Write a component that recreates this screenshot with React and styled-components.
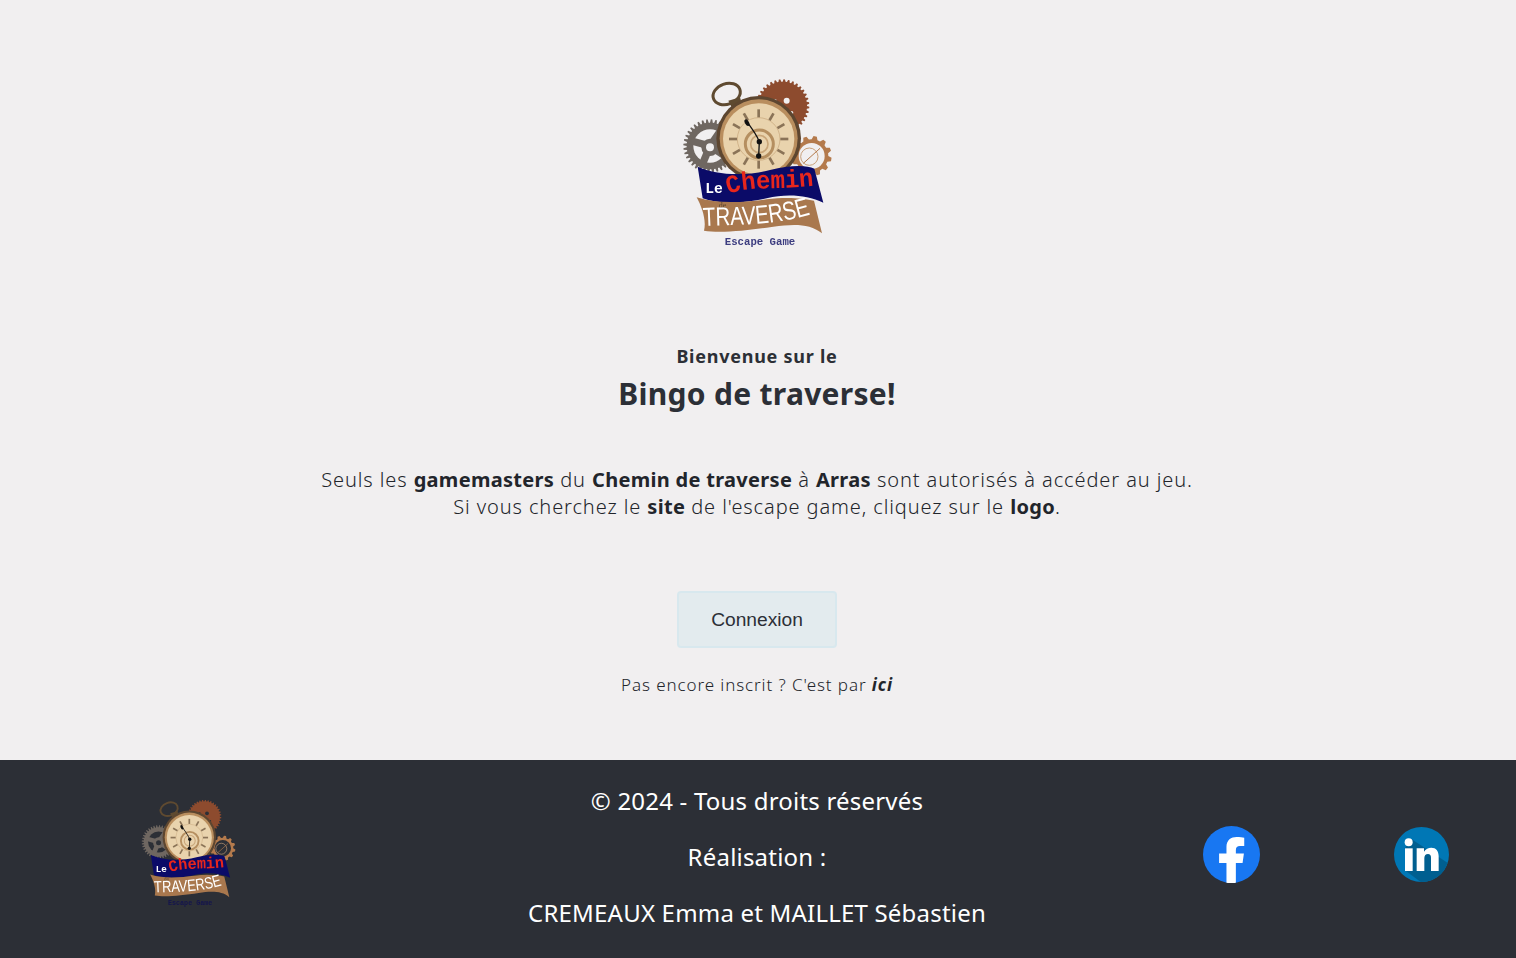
import React, { useId } from "react";
import styled, { createGlobalStyle } from "styled-components";

const GlobalStyle = createGlobalStyle`
  html, body {
    margin: 0;
    padding: 0;
    background: #f1eff0;
  }
  body {
    font-family: "Noto Sans", "Open Sans", sans-serif;
    color: #2c2f36;
  }
`;

// toothed wheel, used three times in the logo
const gearPath = (cx, cy, outer, inner, teeth) => {
  const step = (Math.PI * 2) / teeth;
  let d = "";
  for (let i = 0; i < teeth; i++) {
    const a = i * step;
    const pts = [
      [inner, a],
      [outer, a + step * 0.18],
      [outer, a + step * 0.5],
      [inner, a + step * 0.68],
    ];
    pts.forEach(([r, t], j) => {
      const x = (cx + r * Math.cos(t)).toFixed(1);
      const y = (cy + r * Math.sin(t)).toFixed(1);
      d += `${i === 0 && j === 0 ? "M" : "L"}${x} ${y} `;
    });
  }
  return d + "Z";
};

const romanAngles = Array.from({ length: 12 }, (_, i) => i * 30);

const Logo = ({ size, dark }) => {
  const id = useId();
  const chemin = `${id}-chemin`;
  const traverse = `${id}-traverse`;
  const hole = dark ? "#2c2f36" : "#f1eff0";
  return (
    <LogoSvg viewBox="0 0 570 570" width={size} height={size}>
      <defs>
        <path id={chemin} d="M204 372 C280 345 350 362 480 345 L560 340" />
        <path id={traverse} d="M130 468 C230 462 330 470 455 432 L560 400" />
      </defs>

      <ellipse cx="200" cy="72" rx="42" ry="31" transform="rotate(-20 200 72)" fill="none" stroke="#5f4a30" strokeWidth="9" />
      <path d="M205 92 L240 82 L250 118 L222 125 Z" fill="#5f4a30" />

      <path d={gearPath(368, 108, 80, 73, 36)} fill="#8d4b2e" />
      <circle cx="380" cy="92" r="9" fill={hole} />
      <circle cx="345" cy="92" r="5" fill={hole} />
      <circle cx="395" cy="128" r="5" fill={hole} />

      <path d={gearPath(150, 228, 80, 70, 36)} fill="#6f6761" />
      <circle cx="150" cy="228" r="50" fill={hole} />
      <g stroke="#6f6761" strokeWidth="22">
        <line x1="150" y1="228" x2="190" y2="170" />
        <line x1="150" y1="228" x2="92" y2="212" />
        <line x1="150" y1="228" x2="125" y2="288" />
        <line x1="150" y1="228" x2="200" y2="262" />
      </g>
      <circle cx="150" cy="232" r="26" fill="#6f6761" />
      <circle cx="150" cy="232" r="12" fill={hole} />

      <path d={gearPath(455, 258, 60, 50, 12)} fill="#b47a4c" />
      <circle cx="455" cy="258" r="39" fill={hole} />
      <circle cx="448" cy="260" r="26" fill="none" stroke="#c9a07a" strokeWidth="3" />
      <line x1="430" y1="280" x2="480" y2="235" stroke="#b47a4c" strokeWidth="3" />

      <circle cx="296" cy="205" r="127" fill="#5d4630" />
      <circle cx="296" cy="205" r="117" fill="#b98e5e" />
      <circle cx="296" cy="207" r="107" fill="#e9d3ad" />
      <circle cx="296" cy="207" r="64" fill="none" stroke="#c6a478" strokeWidth="2" />
      {romanAngles.map((a) => (
        <rect key={a} x="292" y="118" width="8" height="24" fill="#8a7357" transform={`rotate(${a} 296 207)`} />
      ))}
      <circle cx="298" cy="222" r="42" fill="none" stroke="#b58f60" strokeWidth="9" />
      <circle cx="298" cy="222" r="26" fill="none" stroke="#c9a679" strokeWidth="5" />
      <g stroke="#111" strokeLinecap="round" fill="#111">
        <path d="M258 152 C272 170 290 195 298 215" fill="none" strokeWidth="4" />
        <path d="M298 215 L296 258" fill="none" strokeWidth="4" />
        <ellipse cx="261" cy="158" rx="6" ry="11" transform="rotate(-30 261 158)" stroke="none" />
        <circle cx="298" cy="215" r="8" stroke="none" />
        <circle cx="296" cy="258" r="8" stroke="none" />
      </g>

      <path
        d="M113 290 C170 315 250 320 330 300 C390 285 440 285 463 296 L490 398 C440 375 380 370 320 385 C250 400 180 405 128 385 Z"
        fill="#0b0b68"
      />
      <path
        d="M110 382 C180 405 260 395 320 388 C380 380 430 385 462 392 L486 490 C450 460 400 462 340 470 C260 482 180 490 132 482 C140 450 125 410 110 382 Z"
        fill="#a9784e"
      />

      <LeText x="136" y="370">Le</LeText>
      <CheminText>
        <textPath href={`#${chemin}`} textLength="260" lengthAdjust="spacingAndGlyphs">Chemin</textPath>
      </CheminText>
      <DeText x="176" y="414">de</DeText>
      <TraverseText>
        <textPath href={`#${traverse}`} textLength="325" lengthAdjust="spacingAndGlyphs">TRAVERSE</textPath>
      </TraverseText>
      <EscapeText x="300" y="526" $dark={dark}>Escape Game</EscapeText>
    </LogoSvg>
  );
};

const FacebookIcon = () => (
  <SocialSvg viewBox="0 0 170 170" width="57" height="57">
    <circle cx="85" cy="85" r="85" fill="#1877f2" />
    <path
      d="M70 169 V110 H48 V82 H70 V62 C70 42 84 33 100 33 C110 33 118 34 123 35 V60 H110 C102 60 98 64 98 72 V82 H122 L118 110 H98 V169 A85 85 0 0 1 70 169 Z"
      fill="#fff"
    />
  </SocialSvg>
);

const LinkedinIcon = () => {
  const id = useId();
  return (
    <SocialSvg viewBox="0 0 165 165" width="55" height="55">
      <defs>
        <clipPath id={id}>
          <circle cx="82.5" cy="82.5" r="82.5" />
        </clipPath>
      </defs>
      <circle cx="82.5" cy="82.5" r="82.5" fill="#0077b5" />
      <path d="M52 36 L165 110 L165 165 L80 165 L33 130 L33 64 Z" fill="#005f90" clipPath={`url(#${id})`} />
      <circle cx="44" cy="46" r="12" fill="#fff" />
      <rect x="33" y="64" width="23" height="68" fill="#fff" />
      <path
        d="M68 64 H90 V74 C95 66 103 62 112 62 C126 62 134 72 134 88 V132 H111 V92 C111 85 108 81 102 81 C95 81 91 86 91 93 V132 H68 Z"
        fill="#fff"
      />
    </SocialSvg>
  );
};

export default function App() {
  return (
    <>
      <GlobalStyle />
      <Main>
        <LogoLink href="#">
          <Logo size={190} />
        </LogoLink>
        <Welcome>Bienvenue sur le</Welcome>
        <Title>Bingo de traverse!</Title>
        <Intro>
          Seuls les <strong>gamemasters</strong> du <strong>Chemin de traverse</strong> à{" "}
          <strong>Arras</strong> sont autorisés à accéder au jeu.
          <br />
          Si vous cherchez le <strong>site</strong> de l'escape game, cliquez sur le{" "}
          <strong>logo</strong>.
        </Intro>
        <LoginButton type="button">Connexion</LoginButton>
        <Signup>
          Pas encore inscrit ? C'est par <SignupLink href="#">ici</SignupLink>
        </Signup>
      </Main>
      <Footer>
        <FooterLogo>
          <Logo size={120} dark />
        </FooterLogo>
        <Credits>
          <CreditLine>© 2024 - Tous droits réservés</CreditLine>
          <CreditLine>Réalisation :</CreditLine>
          <CreditLine>CREMEAUX Emma et MAILLET Sébastien</CreditLine>
        </Credits>
        <Socials>
          <SocialLink href="#" aria-label="Facebook">
            <FacebookIcon />
          </SocialLink>
          <SocialLink href="#" aria-label="LinkedIn">
            <LinkedinIcon />
          </SocialLink>
        </Socials>
      </Footer>
    </>
  );
}

const LogoSvg = styled.svg`
  display: block;
  filter: blur(0.5px);
`;

const LeText = styled.text`
  font-family: "Liberation Mono", monospace;
  font-weight: 700;
  font-size: 44px;
  fill: #fff;
`;

const CheminText = styled.text`
  font-family: "Liberation Mono", monospace;
  font-weight: 700;
  font-size: 76px;
  fill: #e8261c;
`;

const DeText = styled.text`
  font-family: "Liberation Serif", serif;
  font-size: 24px;
  fill: #5d4630;
`;

const TraverseText = styled.text`
  font-family: "Liberation Sans", sans-serif;
  font-size: 78px;
  fill: #fff;
`;

const EscapeText = styled.text`
  font-family: "Liberation Mono", monospace;
  font-weight: 700;
  font-size: 32px;
  text-anchor: middle;
  fill: ${(p) => (p.$dark ? "#14144e" : "#3d3d80")};
`;

const SocialSvg = styled.svg`
  display: block;
`;

const Main = styled.main`
  height: 760px;
  box-sizing: border-box;
  padding: 70px 2px 0 0;
  display: flex;
  flex-direction: column;
  align-items: center;
`;

const LogoLink = styled.a`
  display: block;
  margin-left: -4px;
`;

const Welcome = styled.h2`
  margin: 84px 0 0;
  font-size: 18px;
  line-height: 24px;
  font-weight: 700;
  letter-spacing: 0.75px;
`;

const Title = styled.h1`
  margin: 6px 0 0;
  font-size: 30px;
  line-height: 40px;
  font-weight: 700;
  letter-spacing: 0.3px;
`;

const Intro = styled.p`
  margin: 52px 0 0;
  font-size: 20px;
  font-weight: 300;
  line-height: 27px;
  text-align: center;
  letter-spacing: 0.9px;
  color: #22252b;

  strong {
    font-weight: 700;
    letter-spacing: 0.3px;
  }
`;

const LoginButton = styled.button`
  margin-top: 71px;
  width: 160px;
  height: 57px;
  box-sizing: border-box;
  border: 2px solid #d8e8ee;
  border-radius: 4px;
  background: #e3ebee;
  color: #2c2f36;
  font-family: "Liberation Sans", sans-serif;
  font-size: 19.2px;
`;

const Signup = styled.p`
  margin: 24px 0 0;
  font-size: 17px;
  font-weight: 300;
  line-height: 26px;
  letter-spacing: 0.9px;
  color: #22252b;
`;

const SignupLink = styled.a`
  font-weight: 700;
  font-style: italic;
  color: inherit;
  text-decoration: none;
`;

const Footer = styled.footer`
  height: 198px;
  background: #2c2f36;
  color: #fff;
  display: grid;
  grid-template-columns: 1fr 2fr 1fr;
  align-items: start;
`;

const FooterLogo = styled.div`
  display: flex;
  justify-content: center;
  padding: 34px 6px 0 0;
`;

const Credits = styled.div`
  padding: 23px 2px 0 0;
  display: flex;
  flex-direction: column;
  gap: 20px;
`;

const CreditLine = styled.p`
  margin: 0;
  font-size: 24px;
  line-height: 36px;
  text-align: center;
  letter-spacing: 0.2px;
`;

const Socials = styled.div`
  display: grid;
  grid-template-columns: 1fr 1fr;
  justify-items: center;
  align-items: center;
  padding-top: 66px;
`;

const SocialLink = styled.a`
  display: block;
`;
